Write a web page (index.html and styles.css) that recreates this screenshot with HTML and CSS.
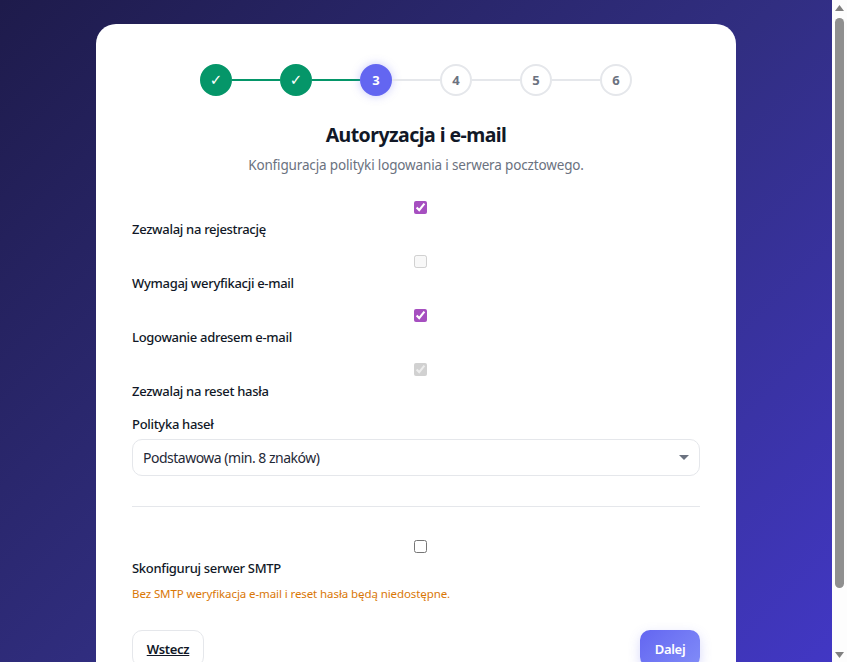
FILE: index.html
```html
<!DOCTYPE html>
<html lang="pl">
<head>
<meta charset="utf-8">
<title>Autoryzacja i e-mail</title>
<link rel="stylesheet" href="styles.css">
</head>
<body>
<div class="page">
<main class="card">
  <ol class="stepper">
    <li class="step done">✓</li><li class="line done"></li>
    <li class="step done">✓</li><li class="line done"></li>
    <li class="step active">3</li><li class="line"></li>
    <li class="step">4</li><li class="line"></li>
    <li class="step">5</li><li class="line"></li>
    <li class="step">6</li>
  </ol>
  <h1 class="title">Autoryzacja i e-mail</h1>
  <p class="subtitle">Konfiguracja polityki logowania i serwera pocztowego.</p>
  <div class="check-group">
    <label class="check"><input type="checkbox" checked><span>Zezwalaj na rejestrację</span></label>
    <label class="check"><input type="checkbox" disabled><span>Wymagaj weryfikacji e-mail</span></label>
    <label class="check"><input type="checkbox" checked><span>Logowanie adresem e-mail</span></label>
    <label class="check"><input type="checkbox" checked disabled><span>Zezwalaj na reset hasła</span></label>
  </div>
  <div class="field">
    <label class="field-label" for="policy">Polityka haseł</label>
    <div class="select" id="policy"><span>Podstawowa (min. 8 znaków)</span><i class="caret"></i></div>
  </div>
  <hr class="divider">
  <label class="check"><input type="checkbox"><span>Skonfiguruj serwer SMTP</span></label>
  <p class="warning">Bez SMTP weryfikacja e-mail i reset hasła będą niedostępne.</p>
  <div class="actions">
    <a class="btn btn-back" href="#">Wstecz</a>
    <button class="btn btn-next" type="button">Dalej</button>
  </div>
</main>
</div>
<div class="scrollbar" aria-hidden="true">
  <svg class="arrow" width="9" height="6" viewBox="0 0 9 6"><path d="M4.5 0L9 6H0z" fill="#808080"/></svg>
  <div class="thumb"></div>
  <svg class="arrow" width="9" height="6" viewBox="0 0 9 6"><path d="M0 0H9L4.5 6z" fill="#808080"/></svg>
</div>
</body>
</html>
```
FILE: styles.css
```css
* { box-sizing: border-box; }
body {
  margin: 0;
  font-family: "Noto Sans", "Open Sans", sans-serif;
  color: #111827;
}
.page {
  margin-right: 15px;
  padding: 24px 0;
  background: linear-gradient(135deg, #1e1b4b 0%, #312e81 50%, #4338ca 100%);
}
.scrollbar {
  position: fixed;
  top: 0;
  right: 0;
  bottom: 0;
  width: 15px;
  padding: 5px 3px 4px;
  display: flex;
  flex-direction: column;
  align-items: center;
  justify-content: space-between;
  background: #fdfdfd;
}
.arrow { display: block; flex: none; }
.thumb {
  flex: none;
  width: 9px;
  height: 570px;
  margin-top: 7px;
  margin-bottom: auto;
  background: #8f8f8f;
  border-radius: 5px;
}
.card {
  width: 640px;
  margin: 0 auto;
  padding: 40px 36px 36px;
  background: #fff;
  border-radius: 20px;
}
.stepper {
  display: flex;
  align-items: center;
  justify-content: center;
  list-style: none;
  margin: 0 0 25px;
  padding: 0;
}
.step {
  display: flex;
  align-items: center;
  justify-content: center;
  width: 32px;
  height: 32px;
  border: 2px solid #e5e7eb;
  border-radius: 50%;
  background: #fff;
  color: #6b7280;
  font-size: 13px;
  font-weight: 700;
}
.step.done { background: #059669; border-color: #059669; color: #fff; font-family: "DejaVu Sans", sans-serif; font-weight: 400; font-size: 15px; }
.step.active { background: #6366f1; border-color: #6366f1; color: #fff; box-shadow: 0 0 10px rgba(99,102,241,.35); }
.line { width: 48px; height: 2px; background: #e5e7eb; }
.line.done { background: #059669; }
.title { margin: 0 0 8px; font-size: 19.5px; line-height: 27px; font-weight: 700; letter-spacing: -.55px; text-align: center; color: #111827; }
.subtitle { margin: 0 0 27px; font-size: 13.5px; line-height: 18px; letter-spacing: -.15px; text-align: center; color: #6b7280; }
.check-group { display: flex; flex-direction: column; gap: 17px; }
.check { display: block; font-size: 13px; font-weight: 500; line-height: 18px; letter-spacing: -.3px; color: #111827; }
.check input {
  display: block;
  width: 13px;
  height: 13px;
  margin: 0 0 6px calc(50% - 2.5px);
  accent-color: #a64fc0;
}
.check span { display: block; }
.field { margin-top: 15px; }
.field-label { display: block; margin-bottom: 6px; font-size: 13px; line-height: 18px; font-weight: 500; letter-spacing: -.3px; color: #111827; }
.select {
  display: flex;
  align-items: center;
  justify-content: space-between;
  height: 37px;
  padding: 0 10px;
  border: 1px solid #e5e7eb;
  border-radius: 10px;
  font-size: 14px;
  letter-spacing: -.5px;
  color: #1f2937;
}
.caret { width: 0; height: 0; border-left: 5.5px solid transparent; border-right: 5.5px solid transparent; border-top: 5.5px solid #6b7280; }
.divider { height: 1px; margin: 30px 0 33px; border: 0; background: #e5e7eb; }
.warning { margin: 9px 0 0; font-size: 11.5px; line-height: 16px; letter-spacing: -.09px; color: #d97706; }
.actions { display: flex; justify-content: space-between; align-items: center; margin-top: 28px; }
.btn { display: inline-flex; align-items: center; justify-content: center; height: 37px; border-radius: 10px; font-family: inherit; font-size: 13px; font-weight: 600; letter-spacing: -.3px; }
.btn-back { width: 72px; border: 1px solid #e5e7eb; background: #fff; color: #111827; }
.btn-next { width: 60px; border: 0; color: #fff; background: linear-gradient(135deg, #6366f1, #818cf8); box-shadow: 0 4px 12px rgba(99,102,241,.25); }
```
